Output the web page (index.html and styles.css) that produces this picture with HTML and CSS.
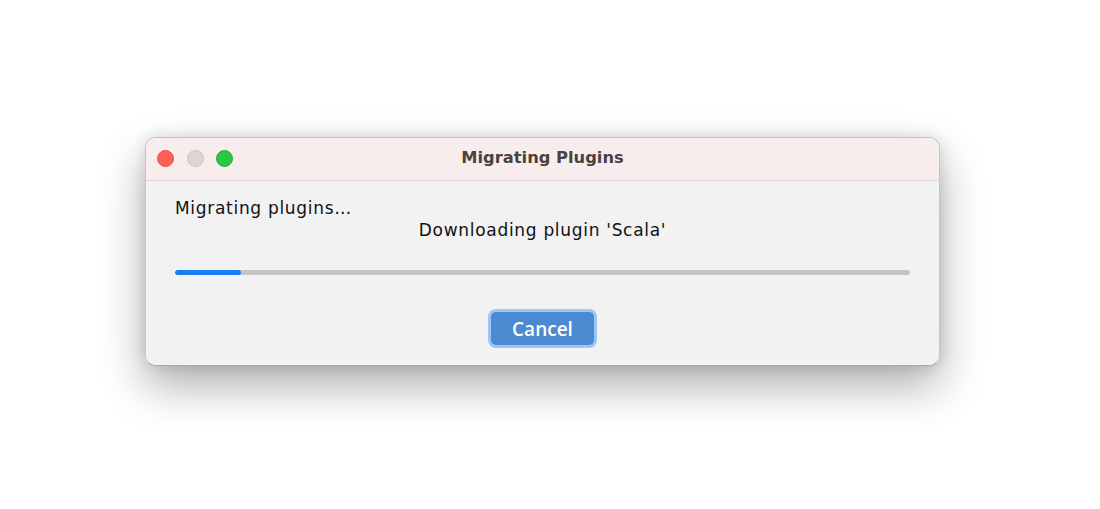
FILE: index.html
```html
<!DOCTYPE html>
<html>
<head>
  <title>Migrating Plugins</title>
  <link rel="stylesheet" href="styles.css">
</head>
<body>
  <div class="desktop">
    <div class="window">
      <div class="titlebar">
        <div class="lights">
          <span class="light close"></span>
          <span class="light min"></span>
          <span class="light max"></span>
        </div>
        <div class="title">Migrating Plugins</div>
      </div>
      <div class="content">
        <p class="status">Migrating plugins…</p>
        <p class="detail">Downloading plugin 'Scala'</p>
        <div class="progress">
          <div class="progress-fill" style="width: 9%"></div>
        </div>
        <div class="actions">
          <button class="button">Cancel</button>
        </div>
      </div>
    </div>
  </div>
</body>
</html>
```

FILE: styles.css
```css
body {
  margin: 0;
  background-color: #ffffff;
  font-family: "DejaVu Sans", Verdana, sans-serif;
}

.desktop {
  height: 509px;
  padding: 137px 0 0 145px;
  box-sizing: border-box;
}

.window {
  width: 795px;
  border-radius: 11px;
  overflow: hidden;
  border: 1px solid #c9c4c4;
  border-bottom-color: #a9a9a9;
  box-sizing: border-box;
  box-shadow: 0px 20px 45px rgba(0, 0, 0, 0.32), 0px 0px 14px rgba(0, 0, 0, 0.12);
}

.titlebar {
  position: relative;
  height: 42px;
  background-color: #f8eded;
  border-bottom: 1px solid #dcd6d6;
  display: flex;
  align-items: center;
  justify-content: center;
}

.lights {
  position: absolute;
  left: 11px;
  top: 12px;
  display: flex;
  gap: 12.5px;
}

.light {
  width: 17px;
  height: 17px;
  border-radius: 50%;
  box-sizing: border-box;
}

.close {
  background-color: #fe5f57;
  border: 1px solid #e8524b;
}

.min {
  background-color: #dbd5d5;
  border: 1px solid #cbc4c4;
}

.max {
  background-color: #29c840;
  border: 1px solid #1fb034;
}

.title {
  margin-top: -3px;
  font-family: "DejaVu Sans", Verdana, sans-serif;
  font-weight: 700;
  font-size: 16.3px;
  color: #4a4141;
}

.content {
  height: 184px;
  background-color: #f2f2f2;
  padding: 16px 29px 0 29px;
  box-sizing: border-box;
}

.status {
  margin: 0;
  font-size: 17px;
  letter-spacing: 0.7px;
  line-height: 22px;
  color: #111111;
}

.detail {
  margin: 0;
  font-size: 17px;
  letter-spacing: 0.7px;
  line-height: 22px;
  text-align: center;
  color: #111111;
}

.progress {
  margin-top: 29px;
  height: 5px;
  border-radius: 3px;
  background-color: #c4c4c4;
  overflow: hidden;
}

.progress-fill {
  height: 100%;
  border-radius: 3px;
  background-color: #1a7ef2;
}

.actions {
  display: flex;
  justify-content: center;
  margin-top: 37px;
}

.button {
  width: 103px;
  height: 33px;
  border: none;
  border-radius: 5px;
  background-color: #4b8ad0;
  box-shadow: 0px 0px 0px 3px #9cc5f3;
  color: #ffffff;
  font-family: "Open Sans", "Noto Sans", sans-serif;
  font-size: 19px;
  font-weight: 600;
  cursor: pointer;
}
```
